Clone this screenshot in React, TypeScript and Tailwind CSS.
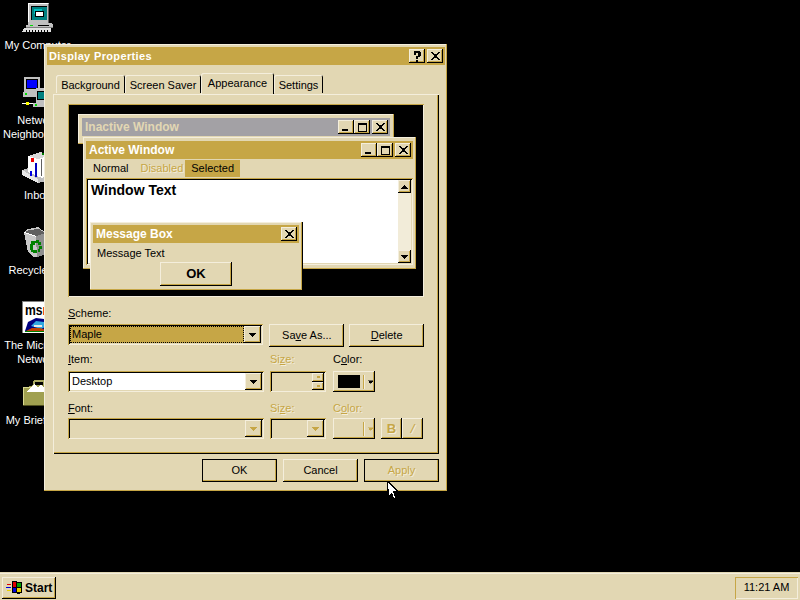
import type { ReactNode } from 'react'

const raised =
	'bg-[#e2d7b3] shadow-[inset_-1px_-1px_0_#000,inset_1px_1px_0_#f4eedc,inset_-2px_-2px_0_#c6a646]'
const sunken =
	'shadow-[inset_1px_1px_0_#c6a646,inset_-1px_-1px_0_#f4eedc,inset_2px_2px_0_#000,inset_-2px_-2px_0_#e2d7b3]'
const windowFrame =
	'bg-[#e2d7b3] shadow-[inset_-1px_-1px_0_#c6a646,inset_1px_1px_0_#f4eedc]'
const disabledText = 'text-[#c6a646] [text-shadow:1px_1px_0_#f4eedc]'

function ComputerIcon() {
	return (
		<svg width="32" height="32" viewBox="0 0 32 32" shapeRendering="crispEdges">
			<path d="M6 2h21v20H6z" fill="#c0c0c0" />
			<path d="M6 2h20v1H7v18H6z" fill="#fff" />
			<path d="M26 3h1v19h-1z" fill="#606060" />
			<rect x="9" y="5" width="16" height="14" fill="#000" />
			<rect x="10" y="6" width="15" height="13" fill="#008080" />
			<rect x="12" y="8" width="8" height="5" fill="#00c0c0" />
			<rect x="13" y="10" width="9" height="6" fill="#000" />
			<rect x="14" y="11" width="7" height="4" fill="#fff" />
			<path d="M6 22h24v1h1v4H4v-3h2z" fill="#c0c0c0" />
			<path d="M4 26h27v1H4z" fill="#808080" />
			<rect x="8" y="24" width="3" height="1" fill="#00e000" />
			<rect x="16" y="24" width="11" height="1" fill="#000" />
			<path d="M2 27h27v4H0z" fill="#e0e0e0" />
			<path d="M4 29h1v2H4zM7 29h1v2H7zM10 29h1v2h-1zM13 29h1v2h-1zM16 29h1v2h-1zM19 29h1v2h-1zM22 29h1v2h-1zM25 29h1v2h-1z" fill="#000" />
		</svg>
	)
}

function NetworkIcon() {
	return (
		<svg width="32" height="32" viewBox="0 0 32 32" shapeRendering="crispEdges">
			<rect x="2" y="1" width="16" height="15" fill="#c0c0c0" />
			<rect x="4" y="3" width="12" height="10" fill="#000" />
			<rect x="5" y="4" width="10" height="8" fill="#0000ff" />
			<rect x="1" y="16" width="13" height="5" fill="#c0c0c0" />
			<rect x="3" y="17" width="2" height="2" fill="#00e000" />
			<rect x="14" y="12" width="16" height="15" fill="#c0c0c0" />
			<rect x="15" y="15" width="13" height="9" fill="#000" />
			<rect x="16" y="16" width="11" height="7" fill="#008080" />
			<rect x="11" y="27" width="21" height="4" fill="#c0c0c0" />
			<rect x="13" y="28" width="2" height="2" fill="#00e000" />
			<rect x="4" y="26" width="3" height="3" fill="#ffff00" />
			<path d="M0 27h4v1H0zM7 27h4v1H7z" fill="#fff" />
		</svg>
	)
}

function InboxIcon() {
	return (
		<svg width="32" height="32" viewBox="0 0 32 32" shapeRendering="crispEdges">
			<path d="M0 19l6-2 18 9v4l-8 2-16-8z" fill="#c0c0c0" />
			<path d="M0 24l16 8v-4L0 19z" fill="#e8e8e8" />
			<path d="M6 5l12-4 10 3v19l-8 4-14-6z" fill="#fff" />
			<path d="M6 5l12-4 10 3-12 4z" fill="#d8d8d8" />
			<path d="M9 7h3v4H9z" fill="#f00000" />
			<path d="M20 2h3v2h-3zM25 3h3v3h-3z" fill="#008000" />
			<path d="M8 20h2v5H8z" fill="#0000e0" />
			<path d="M13 12h2v14h-2z" fill="#0000c0" />
			<path d="M19 8h1v17h-1zM22 7h1v16h-1zM25 7h1v15h-1z" fill="#606060" />
		</svg>
	)
}

function RecycleIcon() {
	return (
		<svg width="32" height="32" viewBox="0 0 32 32" shapeRendering="crispEdges">
			<path d="M2 6l4-3 10-2 8 6-2 22-10 2-6-5z" fill="#c8c8c8" />
			<path d="M3 6l4-2 10-1 6 4-9 3z" fill="#606060" />
			<path d="M14 10l9-3-1 22-7 2z" fill="#909090" />
			<path d="M2 6l12 4v1L2 7z" fill="#fff" />
			<path d="M9 15h5v-1h3v2h2v3h-3v-2h-3v2h-2v2H8v-3h1z" fill="#008000" />
			<path d="M8 21h3v3h4v3h-4v-1H9v-2H8zM17 20h3v3h-2v3h-2v-3h1z" fill="#008000" />
		</svg>
	)
}

function MsnIcon() {
	return (
		<svg width="32" height="32" viewBox="0 0 32 32">
			<rect x="0" y="0" width="32" height="32" fill="#fff" />
			<path d="M0 0h32v1H0zM0 0h1v32H0z" fill="#808080" />
			<text x="3" y="14" fontFamily="Liberation Sans" fontWeight="bold" fontSize="15" textLength="25" lengthAdjust="spacingAndGlyphs" fill="#000">
				ms<tspan fill="#e00000">n</tspan>
			</text>
			<path d="M3 30l3-9 8-4 8 1 7 6 1 6z" fill="#000080" />
			<path d="M9 25l5-5 8 1 3 4-6 3z" fill="#30a8e0" />
			<path d="M4 30l6-3 8 0 9 3z" fill="#c04000" />
			<path d="M12 24h8v2h-8z" fill="#e8e8e8" />
			<path d="M3 30h25v1H3z" fill="#008000" />
		</svg>
	)
}

function BriefcaseIcon() {
	return (
		<svg width="32" height="32" viewBox="0 0 32 32" shapeRendering="crispEdges">
			<path d="M12 4h10v1h1v6h-2V6h-8v4h-2V5h1z" fill="#a8a860" />
			<path d="M1 11h4l7-2h13l7 2v18H1z" fill="#a0a050" />
			<path d="M1 11h31v1H1zM1 12h1v17H1z" fill="#d8d890" />
			<path d="M4 16l8-8 4 3 3-3 7 8z" fill="#fff" />
			<path d="M1 29h31v1H1z" fill="#505020" />
		</svg>
	)
}

const desktopIcons = [
	{ icon: <ComputerIcon />, label: ['My Computer'] },
	{ icon: <NetworkIcon />, label: ['Network', 'Neighborhood'] },
	{ icon: <InboxIcon />, label: ['Inbox'] },
	{ icon: <RecycleIcon />, label: ['Recycle Bin'] },
	{ icon: <MsnIcon />, label: ['The Microsoft', 'Network'] },
	{ icon: <BriefcaseIcon />, label: ['My Briefcase'] },
]

function Glyph({ kind, dim }: { kind: 'x' | 'min' | 'max' | 'help' | 'down' | 'up'; dim?: boolean }) {
	const c = dim ? '#c6a646' : '#000'
	if (kind === 'help')
		return (
			<svg width="8" height="11" viewBox="0 0 8 11" shapeRendering="crispEdges">
				<path d="M1 0h6v1h1v4H7v1H5v2H3V5h2V2H3v2H1V1h0z" fill={c} />
				<rect x="3" y="9" width="2" height="2" fill={c} />
			</svg>
		)
	if (kind === 'x')
		return (
			<svg width="9" height="8" viewBox="0 0 9 8" shapeRendering="crispEdges">
				<path d="M0 0h2v1h1v1h3V1h1V0h2v1H8v1H7v1H6v2h1v1h1v1h1v1H7V7H6V6H3v1H2v1H0V7h1V6h1V5h1V3H2V2H1V1H0z" fill={c} />
			</svg>
		)
	if (kind === 'min')
		return <span className="block w-[6px] h-[2px] bg-black self-end mb-[3px] mr-[2px]" />
	if (kind === 'max')
		return (
			<svg width="9" height="9" viewBox="0 0 9 9" shapeRendering="crispEdges">
				<path d="M0 0h9v9H0zM1 2v6h7V2z" fill={c} fillRule="evenodd" />
			</svg>
		)
	return (
		<svg width="7" height="4" viewBox="0 0 7 4" shapeRendering="crispEdges" className={kind === 'up' ? 'rotate-180' : ''}>
			<path d="M0 0h7v1H6v1H5v1H4v1H3V3H2V2H1V1H0z" fill={c} />
		</svg>
	)
}

function CaptionButton({ kind, gap }: { kind: 'x' | 'min' | 'max' | 'help'; gap?: boolean }) {
	return (
		<div className={`${raised} w-[16px] h-[14px] flex items-center justify-center ${gap ? 'ml-[2px]' : ''}`}>
			<Glyph kind={kind} />
		</div>
	)
}

function TitleBar({ title, className, children }: { title: string; className: string; children: ReactNode }) {
	return (
		<div className={`${className} h-[18px] flex items-center justify-between pr-[2px]`}>
			<span className="font-bold leading-none">{title}</span>
			<div className="flex items-center">{children}</div>
		</div>
	)
}

function Tab({ label, active, className }: { label: string; active?: boolean; className: string }) {
	return (
		<div
			className={`${className} text-center ${
				active
					? 'relative z-10 h-[21px] pt-[2px] bg-[#e2d7b3] rounded-t-[2px] shadow-[inset_1px_1px_0_#f4eedc,inset_-1px_0_0_#000]'
					: 'h-[18px] pt-[2px] mt-[2px] rounded-t-[2px] shadow-[inset_1px_1px_0_#f4eedc,inset_-1px_0_0_#000]'
			}`}
		>
			{label}
		</div>
	)
}

function Button({ children, className, focus, disabled }: { children: ReactNode; className: string; focus?: boolean; disabled?: boolean }) {
	return (
		<div className={`${className} ${focus ? 'outline-1 -outline-offset-1 outline-black' : ''} ${raised} flex items-center justify-center ${disabled ? disabledText : ''}`}>
			{children}
		</div>
	)
}

function ComboArrow({ dim, className }: { dim?: boolean; className?: string }) {
	return (
		<div className={`${raised} ${className ?? 'w-[17px] h-[17px]'} flex items-center justify-center`}>
			<Glyph kind="down" dim={dim} />
		</div>
	)
}

function Combo({ className, children, bg, dim }: { className: string; children?: ReactNode; bg: string; dim?: boolean }) {
	return (
		<div className={`${className} ${sunken} h-[21px] p-[2px] flex ${bg}`}>
			<div className="flex-1 flex items-center pl-[2px] min-w-0">{children}</div>
			<ComboArrow dim={dim} />
		</div>
	)
}

function ColorButton({ dim }: { dim?: boolean }) {
	return (
		<div className={`${raised} w-[42px] h-[21px] flex items-center pl-[5px]`}>
			<div className={`w-[22px] h-[13px] ${dim ? '' : 'bg-black'}`} />
			<div className="w-[1px] h-[14px] ml-[3px] bg-[#c6a646] shadow-[1px_0_0_#f4eedc]" />
			<div className="ml-[3px] scale-[0.8]">
				<Glyph kind="down" dim={dim} />
			</div>
		</div>
	)
}

function Label({ children, className }: { children: ReactNode; className?: string }) {
	return <div className={`h-[14px] leading-[14px] ${className ?? ''}`}>{children}</div>
}

function Preview() {
	return (
		<div className="relative h-[193px] mt-[10px] mx-[15px] bg-black shadow-[inset_1px_1px_0_#c6a646,inset_-1px_-1px_0_#f4eedc] shrink-0 text-[12px]">
			{/* inactive window */}
			<div className={`${windowFrame} absolute left-[10px] top-[10px] w-[316px] h-[30px] p-[4px] pb-0`}>
				<TitleBar title="Inactive Window" className="bg-[#a3a1a5] text-[#e2d7b3] pl-[3px]">
					<CaptionButton kind="min" />
					<CaptionButton kind="max" />
					<CaptionButton kind="x" gap />
				</TitleBar>
			</div>
			{/* active window */}
			<div className={`${windowFrame} absolute left-[15px] top-[33px] w-[333px] h-[132px] p-[3px] pt-[4px] pb-[4px] flex flex-col`}>
				<TitleBar title="Active Window" className="bg-[#c6a646] text-white pl-[3px]">
					<CaptionButton kind="min" />
					<CaptionButton kind="max" />
					<CaptionButton kind="x" gap />
				</TitleBar>
				<div className="h-[19px] flex items-center text-[11px]">
					<span className="pl-[7px] pr-[6px] leading-[17px]">Normal</span>
					<span className={`pl-[6px] pr-[2px] leading-[17px] ${disabledText}`}>Disabled</span>
					<span className="px-[6px] leading-[17px] h-[17px] bg-[#c6a646]">Selected</span>
				</div>
				<div className={`flex-1 flex p-[2px] bg-white ${sunken}`}>
					<div className="flex-1 font-bold text-[14px] leading-[18px] pl-[3px] pt-[1px]">Window Text</div>
					<div className="w-[13px] flex flex-col justify-between bg-[#f2ecd9]">
						<div className={`${raised} h-[13px] flex items-center justify-center`}><Glyph kind="up" /></div>
						<div className={`${raised} h-[13px] flex items-center justify-center`}><Glyph kind="down" /></div>
					</div>
				</div>
			</div>
			{/* message box */}
			<div className="bg-[#e2d7b3] shadow-[inset_-1px_-1px_0_#c6a646,inset_1px_1px_0_#f4eedc,1px_0_0_#000] absolute left-[22px] top-[118px] w-[212px] h-[68px] p-[3px] flex flex-col">
				<TitleBar title="Message Box" className="bg-[#c6a646] text-white pl-[3px]">
					<CaptionButton kind="x" />
				</TitleBar>
				<div className="pl-[4px] mt-[3px] h-[15px] leading-[15px] text-[11px]">Message Text</div>
				<Button className="self-center w-[72px] h-[24px] mt-[1px] font-bold text-[13px]">OK</Button>
			</div>
		</div>
	)
}

function AppearanceForm() {
	return (
		<div className="mx-[15px] mt-[9px]">
			<Label><u>S</u>cheme:</Label>
			<div className="flex items-start mt-[4px]">
				<div className={`${sunken} w-[196px] h-[21px] p-[2px] flex bg-[#e2d7b3]`}>
					<div className="flex-1 bg-[#c6a646] outline-dotted outline-1 -outline-offset-1 outline-black pl-[2px] flex items-center">Maple</div>
					<ComboArrow />
				</div>
				<Button className="w-[75px] h-[23px] ml-[6px]">Sa<u>v</u>e As...</Button>
				<Button className="w-[75px] h-[23px] ml-[5px]"><u>D</u>elete</Button>
			</div>
			<div className="flex mt-[5px]">
				<Label className="w-[202px]"><u>I</u>tem:</Label>
				<Label className={`w-[63px] ${disabledText}`}>Si<u>z</u>e:</Label>
				<Label>C<u>o</u>lor:</Label>
			</div>
			<div className="flex items-start mt-[5px]">
				<Combo className="w-[196px]" bg="bg-white">Desktop</Combo>
				<div className={`${sunken} w-[56px] h-[21px] ml-[6px] p-[2px] flex justify-end`}>
					<div className="w-[12px] flex flex-col">
						<div className={`${raised} flex-1 flex items-center justify-center`}><span className="scale-[0.7]"><Glyph kind="up" dim /></span></div>
						<div className={`${raised} flex-1 flex items-center justify-center`}><span className="scale-[0.7]"><Glyph kind="down" dim /></span></div>
					</div>
				</div>
				<div className="ml-[7px]"><ColorButton /></div>
			</div>
			<div className="flex mt-[9px]">
				<Label className="w-[202px]"><u>F</u>ont:</Label>
				<Label className={`w-[63px] ${disabledText}`}>Si<u>z</u>e:</Label>
				<Label className={disabledText}>C<u>o</u>lor:</Label>
			</div>
			<div className="flex items-start mt-[3px]">
				<Combo className="w-[196px]" bg="bg-[#e2d7b3]" dim />
				<Combo className="w-[56px] ml-[6px]" bg="bg-[#e2d7b3]" dim />
				<div className="ml-[7px]"><ColorButton dim /></div>
				<Button className="w-[21px] h-[21px] ml-[6px] font-bold text-[13px]" disabled>B</Button>
				<Button className="w-[21px] h-[21px] italic text-[13px]" disabled>/</Button>
			</div>
		</div>
	)
}

function DisplayProperties() {
	return (
		<div className={`${windowFrame} absolute left-[44px] top-[44px] w-[403px] h-[447px] pt-[3px] pl-[3px] pr-[2px] flex flex-col`}>
			<TitleBar title="Display Properties" className="bg-[#c6a646] text-white pl-[2px] tracking-[0.35px]">
				<CaptionButton kind="help" />
				<CaptionButton kind="x" gap />
			</TitleBar>
			<div className="flex mt-[8px] ml-[9px] h-[21px] items-start">
				<Tab className="w-[69px]" label="Background" />
				<Tab className="w-[76px]" label="Screen Saver" />
				<Tab className="w-[73px]" label="Appearance" active />
				<Tab className="w-[49px]" label="Settings" />
			</div>
			<div className="ml-[6px] w-[386px] h-[360px] flex flex-col shadow-[inset_1px_1px_0_#f4eedc,inset_-1px_-1px_0_#000,inset_-2px_-2px_0_#c6a646]">
				<Preview />
				<AppearanceForm />
			</div>
			<div className="flex justify-end gap-[6px] mt-[5px] mr-[6px]">
				<Button className="w-[75px] h-[23px]" focus>OK</Button>
				<Button className="w-[75px] h-[23px]">Cancel</Button>
				<Button className="w-[75px] h-[23px]" focus disabled>Apply</Button>
			</div>
		</div>
	)
}

function Taskbar() {
	return (
		<div className="absolute left-0 right-0 bottom-0 h-[28px] bg-[#e2d7b3] shadow-[inset_0_1px_0_#e2d7b3,inset_0_2px_0_#f4eedc] flex items-center justify-between px-[2px] pt-[3px]">
			<div className={`${raised} w-[54px] h-[22px] flex items-center pl-[4px] gap-[2px] font-bold text-[12px]`}>
				<svg width="17" height="15" viewBox="0 0 17 15" shapeRendering="crispEdges">
					<path d="M6 1h4l1 1h5v11l-5 1-1-1H6z" fill="#000" />
					<path d="M7 2h3v5H7z" fill="#e00000" />
					<path d="M11 3h4v4h-4z" fill="#00a000" />
					<path d="M7 8h3v4H7z" fill="#0000e0" />
					<path d="M11 8h4v4h-4z" fill="#e8d000" />
					<path d="M1 4h4v1H1z" fill="#e00000" />
					<path d="M0 7h5v1H0z" fill="#0000e0" />
					<path d="M1 10h4v1H1z" fill="#e8d000" />
				</svg>
				Start
			</div>
			<div className="w-[63px] h-[22px] flex items-center justify-center shadow-[inset_1px_1px_0_#c6a646,inset_-1px_-1px_0_#f4eedc]">11:21 AM</div>
		</div>
	)
}

function Cursor() {
	return (
		<svg className="absolute left-[387px] top-[481px]" width="12" height="19" viewBox="0 0 12 19" shapeRendering="crispEdges">
			<path d="M0 0l1 0 10 10v1H7l2 5v2H7l-2-5-3 3H0z" fill="#000" />
			<path d="M1 2l8 8H6l2 6-1 1-2-6-3 3z" fill="#fff" />
		</svg>
	)
}

export default function App() {
	return (
		<div className="relative w-[800px] h-[600px] overflow-hidden bg-black text-black text-[11px] font-['Liberation_Sans',Arial,sans-serif]">
			<div className="flex flex-col w-[75px] pt-[1px]">
				{desktopIcons.map((item) => (
					<div key={item.label[0]} className="h-[75px] flex flex-col items-center">
						{item.icon}
						<div className="mt-[5px] text-white text-center leading-[14px] whitespace-nowrap">
							{item.label.map((line) => (
								<div key={line}>{line}</div>
							))}
						</div>
					</div>
				))}
			</div>
			<DisplayProperties />
			<Taskbar />
			<Cursor />
		</div>
	)
}
